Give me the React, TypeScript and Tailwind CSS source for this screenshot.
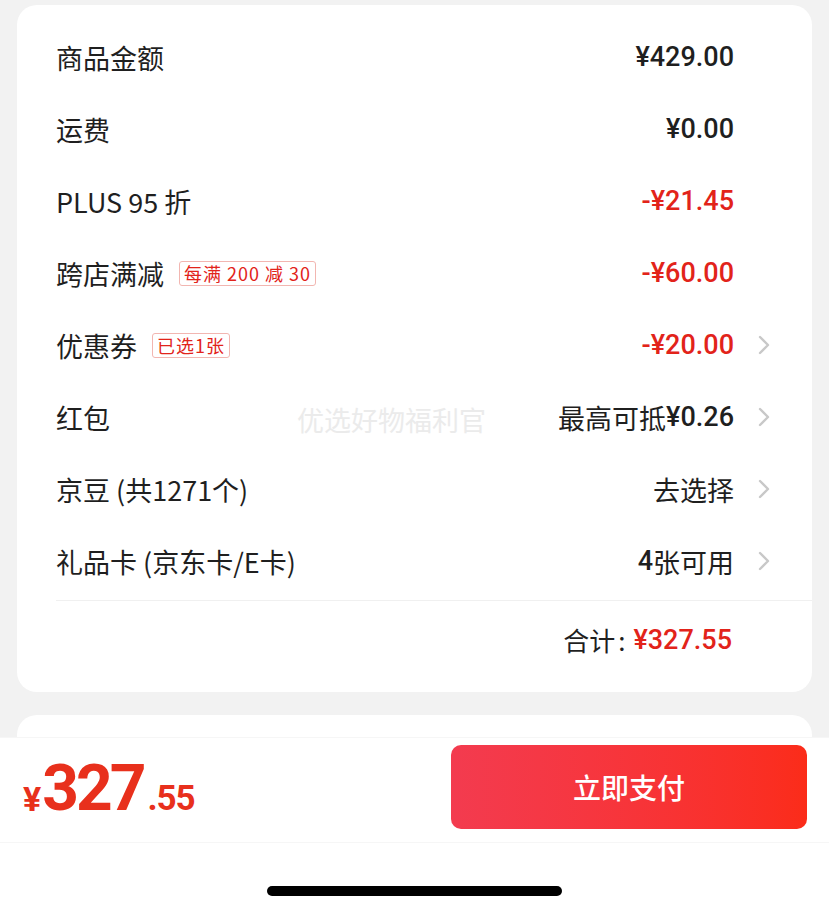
import React from "react";

const RED = "text-[#e2231a]";

type Row = {
  label: string;
  badge?: string;
  value: React.ReactNode;
  red?: boolean;
  chevron?: boolean;
};

const CJK = "font-['Noto_Sans_CJK_SC',sans-serif]";
const NUM = "font-['Roboto','Noto_Sans_CJK_SC',sans-serif]";

const Num = ({ children }: { children: React.ReactNode }) => (
  <span className={`${NUM} text-[27px] font-medium`}>{children}</span>
);

const rows: Row[] = [
  { label: "商品金额", value: <Num>¥429.00</Num> },
  { label: "运费", value: <Num>¥0.00</Num> },
  { label: "PLUS 95 折", value: <Num>-¥21.45</Num>, red: true },
  { label: "跨店满减", badge: "每满 200 减 30", value: <Num>-¥60.00</Num>, red: true },
  { label: "优惠券", badge: "已选1张", value: <Num>-¥20.00</Num>, red: true, chevron: true },
  {
    label: "红包",
    value: (
      <>
        最高可抵<Num>¥0.26</Num>
      </>
    ),
    chevron: true,
  },
  { label: "京豆 (共1271个)", value: "去选择", chevron: true },
  {
    label: "礼品卡 (京东卡/E卡)",
    value: (
      <>
        <Num>4</Num>张可用
      </>
    ),
    chevron: true,
  },
];

const Chevron = () => (
  <svg width="12" height="20" viewBox="0 0 12 20" fill="none">
    <polyline
      points="2,2 10,10 2,18"
      stroke="#c8c8c8"
      strokeWidth="2.4"
      strokeLinecap="round"
      strokeLinejoin="round"
    />
  </svg>
);

const App = () => {
  return (
    <div className="flex h-[915px] w-[829px] flex-col overflow-hidden bg-[#f2f2f2]">
      {/* PRICE DETAIL CARD */}
      <div className="relative mx-[17px] mt-[5px] rounded-[20px] bg-white pt-[16px]">
        {rows.map((r) => (
          <div key={r.label} className="flex h-[72px] items-center pl-[39px] pr-[40px]">
            <div className="flex flex-1 items-center gap-[15px]">
              <span className={`${CJK} text-[27px] leading-none text-[#1f1f1f]`}>{r.label}</span>
              {r.badge && (
                <span
                  className={`${CJK} flex h-[25px] items-center whitespace-pre rounded-[3px] border border-[#f2b6b1] px-[4px] text-[18px] leading-none tracking-[1px] ${RED}`}
                >
                  {r.badge}
                </span>
              )}
            </div>
            <span
              className={`${CJK} flex items-center text-[27px] leading-none ${
                r.red ? RED : "text-[#1f1f1f]"
              }`}
            >
              {r.value}
            </span>
            <div className="flex w-[38px] justify-end pr-[2px]">{r.chevron && <Chevron />}</div>
          </div>
        ))}

        {/* DIVIDER */}
        <div className="ml-[39px] mt-[3px] h-px bg-[#f0f0f0]" />

        {/* TOTAL */}
        <div className="flex h-[78px] items-center justify-end pr-[80px]">
          <span className={`${CJK} text-[26px] leading-none text-[#1f1f1f]`}>合计</span>
          <span className={`${CJK} ml-[3px] mr-[8px] text-[26px] leading-none text-[#1f1f1f]`}>:</span>
          <span className={`${NUM} text-[27px] font-medium leading-none ${RED}`}>¥327.55</span>
        </div>
        <div className="h-[13px]" />

        {/* WATERMARK */}
        <div
          className={`${CJK} pointer-events-none absolute left-[280px] top-[401px] text-[27px] leading-none text-[#ebebeb]`}
        >
          优选好物福利官
        </div>
      </div>

      {/* NEXT CARD PEEK */}
      <div className="mx-[17px] mt-[23px] h-[22px] rounded-t-[20px] bg-white" />

      {/* BOTTOM BAR */}
      <div className="flex flex-1 flex-col border-t border-[#f6f6f6] bg-white">
        <div className="flex h-[105px] items-start border-b border-[#f6f6f6] pt-[7px]">
          <div className="flex h-[84px] flex-1 items-end pb-[17px] pl-[23px] font-['Roboto',sans-serif] font-bold leading-none text-[#e8301c]">
            <span className="text-[34px] leading-[26px]">¥</span>
            <span className="ml-[1px] text-[64px] leading-[47px] tracking-[-3px]">327</span>
            <span className="ml-[4px] text-[35px] leading-[26px] tracking-[-1px]">.55</span>
          </div>
          <button
            className={`${CJK} mr-[22px] flex h-[84px] w-[356px] items-center justify-center rounded-[10px] bg-gradient-to-r from-[#f33b4f] to-[#fb2c19] text-[28px] font-medium text-white`}
          >
            立即支付
          </button>
        </div>
        <div className="flex flex-1 justify-center pt-[43px]">
          <div className="h-[10px] w-[295px] rounded-full bg-black" />
        </div>
      </div>
    </div>
  );
};

export default App;
